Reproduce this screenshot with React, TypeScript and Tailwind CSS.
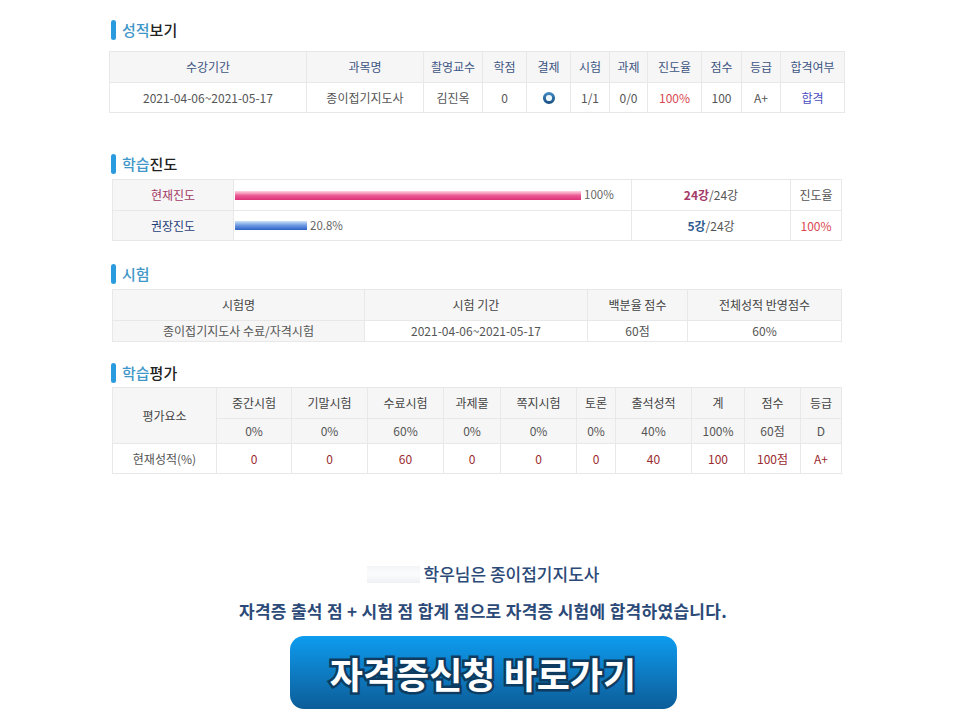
const font = "font-['Noto_Sans_CJK_KR','Noto_Sans',sans-serif]";

function Heading({ blue, dark, className }: { blue: string; dark?: string; className: string }) {
  return (
    <div className={`flex h-5 items-center gap-[6px] ml-[111px] ${className}`}>
      <span className="h-5 w-[5px] rounded-full bg-[#2b9be0]" />
      <h2 className="text-[15px] leading-5 font-medium text-[#222]">
        <span className="text-[#3f97c9]">{blue}</span>
        {dark}
      </h2>
    </div>
  );
}

const cell = "border border-[#e8e8e8] p-0 text-center align-middle font-normal";
const head = `${cell} bg-[#f6f6f6]`;

const scoreCols = [197, 117, 59, 44, 44, 39, 38, 54, 40, 39, 64];
const scoreHeads = ["수강기간", "과목명", "촬영교수", "학점", "결제", "시험", "과제", "진도율", "점수", "등급", "합격여부"];

const examCols = [252, 223, 100, 154];
const evalCols = [104, 75, 76, 76, 57, 76, 39, 76, 53, 56, 41];
const evalHeads = ["중간시험", "기말시험", "수료시험", "과제물", "쪽지시험", "토론", "출석성적", "계", "점수", "등급"];
const evalWeights = ["0%", "0%", "60%", "0%", "0%", "0%", "40%", "100%", "60점", "D"];
const evalScores = ["0", "0", "60", "0", "0", "0", "40", "100", "100점", "A+"];

function Cols({ widths }: { widths: number[] }) {
  return (
    <colgroup>
      {widths.map((w, i) => (
        <col key={i} style={{ width: w }} />
      ))}
    </colgroup>
  );
}

function Ring() {
  return (
    <svg width="14" height="14" viewBox="0 0 14 14" className="mx-auto block">
      <defs>
        <linearGradient id="ring" x1="0" y1="0" x2="0" y2="1">
          <stop offset="0" stopColor="#3f86bd" />
          <stop offset="1" stopColor="#1d5488" />
        </linearGradient>
      </defs>
      <circle cx="7" cy="7" r="4.6" fill="#eef7fc" stroke="url(#ring)" strokeWidth="3" />
    </svg>
  );
}

function Bar({ width, label, className }: { width: number; label: string; className: string }) {
  return (
    <div className="flex items-center gap-[3px] pl-[1px] text-[11.5px] text-[#666]">
      <span className={`h-[9px] ${className}`} style={{ width }} />
      {label}
    </div>
  );
}

export default function App() {
  return (
    <div className={`${font} h-[725px] w-[966px] overflow-hidden bg-white pt-5 text-[12px] text-[#555]`}>
      <Heading blue="성적" dark="보기" className="" />
      <table className="mt-[11px] ml-[109px] w-[735px] table-fixed border-collapse">
        <Cols widths={scoreCols} />
        <thead>
          <tr className="h-[31px]">
            {scoreHeads.map((h) => (
              <th key={h} className={`${head} font-medium text-[#3d5583]`}>{h}</th>
            ))}
          </tr>
        </thead>
        <tbody>
          <tr className="h-[30px]">
            <td className={cell}>2021-04-06~2021-05-17</td>
            <td className={cell}>종이접기지도사</td>
            <td className={cell}>김진옥</td>
            <td className={cell}>0</td>
            <td className={cell}><Ring /></td>
            <td className={cell}>1/1</td>
            <td className={cell}>0/0</td>
            <td className={`${cell} text-[#d9484f]`}>100%</td>
            <td className={cell}>100</td>
            <td className={cell}>A+</td>
            <td className={`${cell} text-[#4a4fc0]`}>합격</td>
          </tr>
        </tbody>
      </table>

      <Heading blue="학습" dark="진도" className="mt-[41px]" />
      <table className="mt-[5px] ml-[112px] w-[729px] table-fixed border-collapse">
        <Cols widths={[121, 398, 159, 51]} />
        <tbody>
          <tr className="h-[31px]">
            <td className={`${cell} bg-[#f6f6f6] font-medium text-[#a33a67]`}>현재진도</td>
            <td className={cell}>
              <Bar width={346} label="100%" className="bg-gradient-to-b from-[#fbd5e3] via-[#ea5a94] to-[#dd2f78]" />
            </td>
            <td className={cell}>
              <b className="font-bold text-[#a33a67]">24강</b>/24강
            </td>
            <td className={cell}>진도율</td>
          </tr>
          <tr className="h-[30px]">
            <td className={`${cell} bg-[#f6f6f6] font-medium text-[#1f3f78]`}>권장진도</td>
            <td className={cell}>
              <Bar width={72} label="20.8%" className="bg-gradient-to-b from-[#cfe3f8] via-[#6a97e0] to-[#2f62c4]" />
            </td>
            <td className={cell}>
              <b className="font-bold text-[#2f5c8e]">5강</b>/24강
            </td>
            <td className={`${cell} text-[#d9484f]`}>100%</td>
          </tr>
        </tbody>
      </table>

      <Heading blue="시험" className="mt-[23px]" />
      <table className="mt-[5px] ml-[112px] w-[729px] table-fixed border-collapse">
        <Cols widths={examCols} />
        <thead>
          <tr className="h-[31px]">
            <th className={`${head} font-medium text-[#444]`}>시험명</th>
            <th className={`${head} font-medium text-[#444]`}>시험 기간</th>
            <th className={`${head} font-medium text-[#444]`}>백분율 점수</th>
            <th className={`${head} font-medium text-[#444]`}>전체성적 반영점수</th>
          </tr>
        </thead>
        <tbody>
          <tr className="h-[21px]">
            <td className={`${head}`}>종이접기지도사 수료/자격시험</td>
            <td className={cell}>2021-04-06~2021-05-17</td>
            <td className={cell}>60점</td>
            <td className={cell}>60%</td>
          </tr>
        </tbody>
      </table>

      <Heading blue="학습" dark="평가" className="mt-[21px]" />
      <table className="mt-[4px] ml-[112px] w-[729px] table-fixed border-collapse">
        <Cols widths={evalCols} />
        <tbody>
          <tr className="h-[31px]">
            <th rowSpan={2} className={`${head} font-medium text-[#444]`}>평가요소</th>
            {evalHeads.map((h) => (
              <th key={h} className={`${head} font-medium text-[#444]`}>{h}</th>
            ))}
          </tr>
          <tr className="h-[25px]">
            {evalWeights.map((v, i) => (
              <td key={i} className={head}>{v}</td>
            ))}
          </tr>
          <tr className="h-[30px]">
            <td className={cell}>현재성적(%)</td>
            {evalScores.map((v, i) => (
              <td key={i} className={`${cell} text-[#9a2a2e]`}>{v}</td>
            ))}
          </tr>
        </tbody>
      </table>

      <div className="mt-[88px] flex flex-col items-center">
        <div className="flex h-6 items-center text-[17px] font-medium text-[#2c4a78]">
          <span className="mr-1 h-[17px] w-[53px] bg-gradient-to-b from-[#f4f5f7] via-[#fbfcfd] to-[#eef0f4]" />
          학우님은 종이접기지도사
        </div>
        <p className="mt-[13px] text-[17px] leading-6 font-bold tracking-[0.3px] text-[#2c4a78]">
          자격증 출석 점 + 시험 점 합계 점으로 자격증 시험에 합격하였습니다.
        </p>
        <button className="mt-[13px] flex h-[73px] w-[387px] items-center justify-center rounded-[14px] bg-gradient-to-b from-[#0d9cf0] to-[#0c5d98] text-[36px] font-bold text-white [-webkit-text-stroke:5px_#0e3c60] [paint-order:stroke_fill]">
          자격증신청 바로가기
        </button>
      </div>
    </div>
  );
}
